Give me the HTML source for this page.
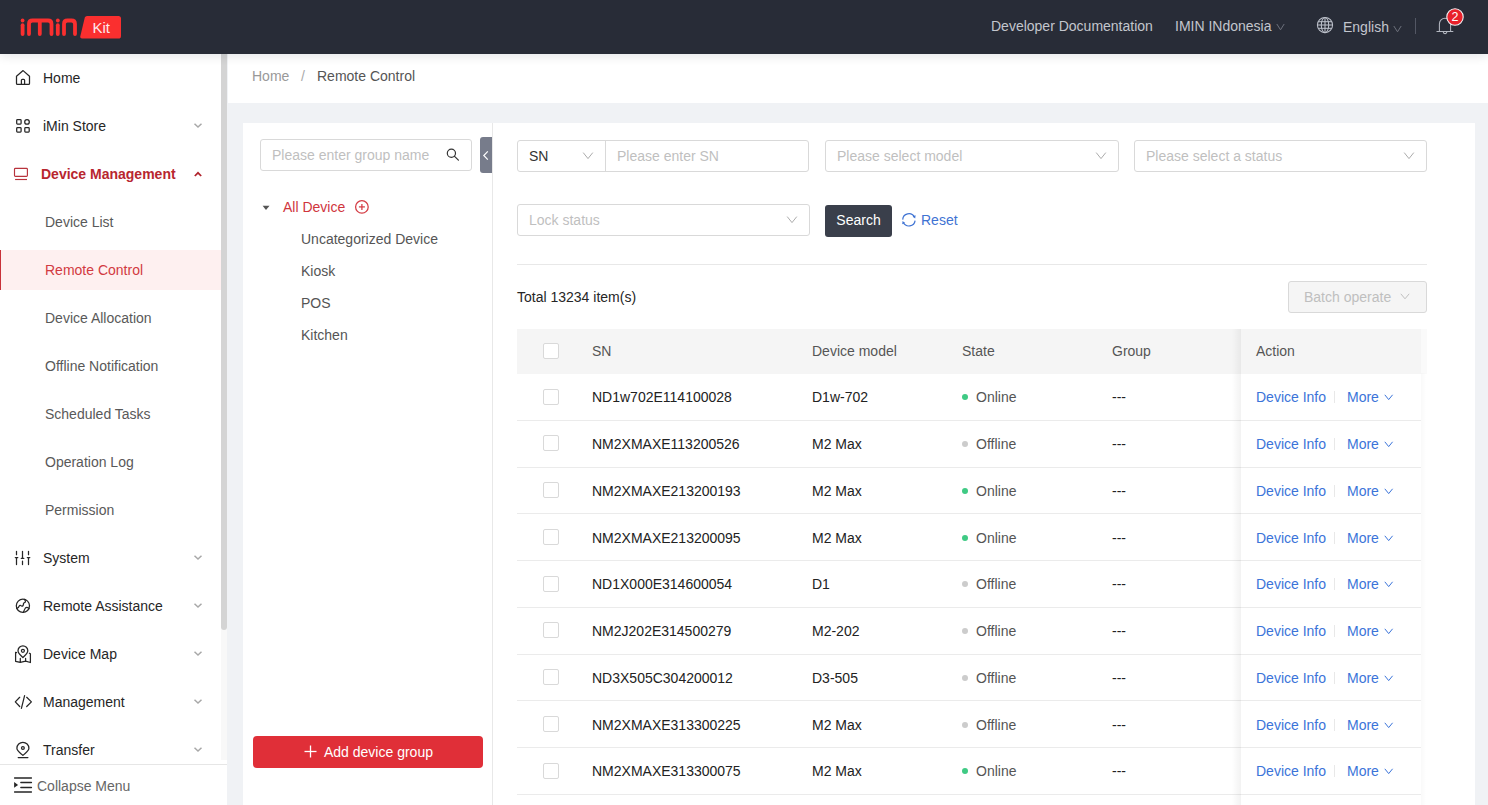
<!DOCTYPE html>
<html><head><meta charset="utf-8">
<style>
*{box-sizing:border-box;margin:0;padding:0}
html,body{width:1488px;height:805px;overflow:hidden;background:#f0f2f5;font-family:"Liberation Sans",sans-serif;font-size:14px;color:#262626}
.abs{position:absolute}
#hdr{position:absolute;left:0;top:0;width:1488px;height:54px;background:#282c37;z-index:10;box-shadow:0 2px 10px rgba(0,21,41,0.11)}
#side{position:absolute;left:0;top:54px;width:227px;height:751px;background:#fff}
.mi{position:absolute;left:0;width:221px;height:40px;line-height:40px;white-space:nowrap}
.mi .t{position:absolute;left:43px;top:0}
.mi.sub .t{left:45px;color:#595959}
.chev{position:absolute;left:193px;top:17px;width:7px;height:7px}
#bc{position:absolute;left:228px;top:54px;width:1260px;height:49px;background:#fff}
#card{position:absolute;left:243px;top:123px;width:1232px;height:682px;background:#fff}
.inp{position:absolute;border:1px solid #d9d9d9;border-radius:3px;background:#fff;height:32px;line-height:30px;color:#bfbfbf;padding-left:11px;white-space:nowrap}
.row{position:absolute;left:517px;width:904px;border-bottom:1px solid #ebebeb}
.cb{position:absolute;left:543px;width:16px;height:16px;border:1px solid #d9d9d9;border-radius:2px;background:#fff}
.cell{position:absolute;white-space:nowrap}
.lnk{color:#3b74d9}
</style></head><body>
<div id="hdr">
  <!-- logo -->
  <svg class="abs" style="left:0;top:0" width="130" height="54" viewBox="0 0 130 54">
    <g fill="none" stroke="#fa2f2f" stroke-width="3.8" stroke-linecap="round" stroke-linejoin="round">
      <line x1="22.6" y1="20.4" x2="22.6" y2="20.5"/>
      <line x1="22.6" y1="25.2" x2="22.6" y2="34.1"/>
      <path d="M29 34.1 V24 Q29 20.5 32.5 20.5 H48 Q51.5 20.5 51.5 24 V34.1 M39.8 21 V34.1"/>
      <line x1="57.8" y1="20.4" x2="57.8" y2="20.5"/>
      <line x1="57.8" y1="25.2" x2="57.8" y2="34.1"/>
      <path d="M64 34.1 V24 Q64 20.5 67.5 20.5 H71.5 Q75 20.5 75 24 V34.1"/>
    </g>
    <path d="M87 16 H118.5 a2.5 2.5 0 0 1 2.5 2.5 V36 a2.6 2.6 0 0 1 -2.6 2.6 H82 a1.8 1.8 0 0 1 -1.7 -2.4 L84.8 17.5 a2.4 2.4 0 0 1 2.2 -1.5z" fill="#fa2f2f"/>
    <text x="92.5" y="33.3" fill="#ffe8ea" font-family="Liberation Sans" font-size="15">Kit</text>
  </svg>
  <div class="abs" style="left:991px;top:18px;color:#c3c6cd;line-height:16px">Developer Documentation</div>
  <div class="abs" style="left:1175px;top:18px;color:#c3c6cd;line-height:16px">IMIN INdonesia</div>
  <svg class="abs" style="left:1276px;top:23px" width="9" height="8" viewBox="0 0 9 8"><path d="M0.8 1 L4.5 6.8 L8.2 1" fill="none" stroke="#6d717c" stroke-width="1"/></svg>
  <svg class="abs" style="left:1312px;top:12px" width="26" height="26" viewBox="1312 12 26 26"><g fill="none" stroke="#bcc0ca" stroke-width="1.05"><circle cx="1325" cy="25" r="7.6"/><ellipse cx="1325" cy="25" rx="3.7" ry="7.6"/><line x1="1325" y1="17.4" x2="1325" y2="32.6"/><line x1="1318.2" y1="21.7" x2="1331.8" y2="21.7"/><line x1="1317.4" y1="25" x2="1332.6" y2="25"/><line x1="1318.2" y1="28.3" x2="1331.8" y2="28.3"/></g></svg>
  <div class="abs" style="left:1343px;top:19px;color:#c3c6cd;line-height:16px">English</div>
  <svg class="abs" style="left:1393px;top:25px" width="9" height="8" viewBox="0 0 9 8"><path d="M0.8 1 L4.5 6.8 L8.2 1" fill="none" stroke="#6d717c" stroke-width="1"/></svg>
  <div class="abs" style="left:1415px;top:18px;width:1px;height:16px;background:#535764"></div>
  <svg class="abs" style="left:1430px;top:4px" width="40" height="36" viewBox="1430 4 40 36"><g fill="none" stroke="#b3b7c0" stroke-width="1.05"><path d="M1436.5 31.5 H1453.3 M1439.4 31.5 V23.9 A5.6 5.6 0 0 1 1450.6 23.9 V31.5"/><path d="M1443.2 31.8 A1.8 1.8 0 0 0 1446.8 31.8"/></g><circle cx="1455" cy="17" r="8.2" fill="#e8212b" stroke="#f4f4f6" stroke-width="1.1"/><text x="1455" y="21.3" text-anchor="middle" fill="#fff" font-family="Liberation Sans" font-size="12.5">2</text></svg>
</div>

<div id="side">
<div class="abs" style="left:0;top:196px;width:221px;height:40px;background:#fef0f0"></div>
<div class="abs" style="left:0;top:196px;width:1px;height:40px;background:#c8323a"></div>
<div class="abs" style="left:43px;top:16px;line-height:16px;color:#262626;white-space:nowrap">Home</div>
<div class="abs" style="left:43px;top:64px;line-height:16px;color:#262626;white-space:nowrap">iMin Store</div>
<div class="abs" style="left:41px;top:112px;line-height:16px;color:#b8262f;font-weight:bold;white-space:nowrap">Device Management</div>
<div class="abs" style="left:45px;top:160px;line-height:16px;color:#595959;white-space:nowrap">Device List</div>
<div class="abs" style="left:45px;top:208px;line-height:16px;color:#d23a41;white-space:nowrap">Remote Control</div>
<div class="abs" style="left:45px;top:256px;line-height:16px;color:#595959;white-space:nowrap">Device Allocation</div>
<div class="abs" style="left:45px;top:304px;line-height:16px;color:#595959;white-space:nowrap">Offline Notification</div>
<div class="abs" style="left:45px;top:352px;line-height:16px;color:#595959;white-space:nowrap">Scheduled Tasks</div>
<div class="abs" style="left:45px;top:400px;line-height:16px;color:#595959;white-space:nowrap">Operation Log</div>
<div class="abs" style="left:45px;top:448px;line-height:16px;color:#595959;white-space:nowrap">Permission</div>
<div class="abs" style="left:43px;top:496px;line-height:16px;color:#262626;white-space:nowrap">System</div>
<div class="abs" style="left:43px;top:544px;line-height:16px;color:#262626;white-space:nowrap">Remote Assistance</div>
<div class="abs" style="left:43px;top:592px;line-height:16px;color:#262626;white-space:nowrap">Device Map</div>
<div class="abs" style="left:43px;top:640px;line-height:16px;color:#262626;white-space:nowrap">Management</div>
<div class="abs" style="left:43px;top:688px;line-height:16px;color:#262626;white-space:nowrap">Transfer</div>
<div class="abs" style="left:221px;top:0;width:6px;height:706px;background:#f8f8f8"></div>
<div class="abs" style="left:221px;top:0;width:6px;height:576px;background:#d4d4d4;border-radius:0 0 3px 3px"></div>
<div class="abs" style="left:0;top:710px;width:227px;height:1px;background:#e6e6e6"></div>
<div class="abs" style="left:37px;top:724px;line-height:16px;color:#666;white-space:nowrap">Collapse Menu</div>
<svg class="abs" style="left:0;top:0" width="227" height="751" viewBox="0 54 227 751">
<g fill="none" stroke="#262626" stroke-width="1.25" stroke-linecap="round" stroke-linejoin="round">
<path d="M16.5 76.2 L23.1 70.6 L29.5 76.2 V83.4 Q29.5 84.4 28.5 84.4 H17.5 Q16.5 84.4 16.5 83.4 Z M21.4 84.4 V80.3 Q21.4 79.4 22.3 79.4 H23.7 Q24.6 79.4 24.6 80.3 V84.4"/>
<rect x="16.7" y="119.7" width="4.4" height="4.4" rx="0.8"/><circle cx="27" cy="121.9" r="2.3"/><rect x="16.7" y="127.7" width="4.4" height="4.4" rx="0.8"/><rect x="24.8" y="127.7" width="4.4" height="4.4" rx="0.8"/>
<path d="M16.5 551.3 V554.7 M15.3 557.5 H17.8 M16.5 557.5 V564.6 M22.5 551.3 V558.4 M21.3 558.4 H23.8 M22.5 561.2 V564.6 M28.5 551.3 V554.7 M27.3 557.5 H29.8 M28.5 557.5 V564.6"/>
<circle cx="22.9" cy="605.8" r="6.6"/><path d="M16.8 608.4 Q18.5 608.3 19.4 605.8 Q19.9 604.9 20.8 605.6 Q22 606.8 23.1 605.5 Q23.6 604.2 23.5 603.5 Q24 602.5 25 602.4 Q26 601.8 24.6 599.4 M23.4 612.3 Q24.4 609.5 25.4 608 Q26.4 607.2 27.6 607.6 Q28.5 608.2 29.1 608.7"/>
<path d="M22.9 657.5 C20.6 655.2 18 653.4 18 650.7 A4.9 4.9 0 0 1 27.8 650.7 C27.8 653.4 25.2 655.2 22.9 657.5 Z"/><circle cx="22.9" cy="650.8" r="1.5"/><path d="M16.6 652.6 L15.6 652.3 V661.3 L20.3 662.4 L25.6 661.2 L30.4 662.5 V653.8 L29.4 653.2 M20.3 658.4 V662.4 M25.6 658.4 V661.2"/>
<path d="M19.7 697.3 L15.3 701.9 L19.7 706.5 M26.7 697.3 L31.4 701.9 L26.7 706.5 M24.6 695.6 L21.4 708.3"/>
<path d="M22.9 755.4 C20 752.6 16.9 750.8 16.9 748.3 A6 6 0 0 1 28.9 748.3 C28.9 750.8 25.8 752.6 22.9 755.4 Z"/><circle cx="22.9" cy="748.1" r="1.4"/><path d="M18.2 757.6 H27.9"/>
</g>
<g fill="none" stroke="#b8333c" stroke-width="1.15"><rect x="14.5" y="168.3" width="12.9" height="8.1" rx="0.9"/><path d="M15.1 179.5 H27"/></g>
<path d="M194.5 123.7 L198 127.1 L201.5 123.7" fill="none" stroke="#a8a8a8" stroke-width="1.45"/>
<path d="M194.5 555.7 L198 559.1 L201.5 555.7" fill="none" stroke="#a8a8a8" stroke-width="1.45"/>
<path d="M194.5 603.7 L198 607.1 L201.5 603.7" fill="none" stroke="#a8a8a8" stroke-width="1.45"/>
<path d="M194.5 651.7 L198 655.1 L201.5 651.7" fill="none" stroke="#a8a8a8" stroke-width="1.45"/>
<path d="M194.5 699.7 L198 703.1 L201.5 699.7" fill="none" stroke="#a8a8a8" stroke-width="1.45"/>
<path d="M194.5 747.7 L198 751.1 L201.5 747.7" fill="none" stroke="#a8a8a8" stroke-width="1.45"/>
<path d="M194.8 176 L198 172.8 L201.2 176" fill="none" stroke="#b0232c" stroke-width="1.7"/>
<g stroke="#262626"><path d="M14.1 778 H31.9 M14.1 792 H31.9" stroke-width="1.7"/><path d="M20.9 782.6 H31.4 M20.9 787.4 H31.4" stroke-width="1.5" stroke-linecap="round"/></g><path d="M14.1 782 V787.8 L18.1 784.9Z" fill="#262626"/>
</svg>
</div>

<div id="bc">
  <div class="abs" style="left:24px;top:14px;color:#999;line-height:16px">Home</div>
  <div class="abs" style="left:73px;top:14px;color:#aaa;line-height:16px">/</div>
  <div class="abs" style="left:89px;top:14px;color:#555;line-height:16px">Remote Control</div>
</div>

<div id="card"></div>
<div class="abs" style="left:492px;top:123px;width:1px;height:682px;background:#e8e8e8"></div>
<div class="inp" style="left:260px;top:139px;width:212px;height:32px">Please enter group name</div>
<svg class="abs" style="left:444px;top:146px" width="18" height="18" viewBox="444 146 18 18"><g fill="none" stroke="#333" stroke-width="1.2"><circle cx="451.4" cy="153.2" r="4.1"/><line x1="454.3" y1="156.1" x2="458.4" y2="160.2" stroke-linecap="round"/></g></svg>
<div class="abs" style="left:480px;top:137px;width:12px;height:36px;background:#777c8b;border-radius:3px 0 0 3px"></div>
<svg class="abs" style="left:480px;top:148px" width="12" height="14" viewBox="480 148 12 14"><path d="M487.8 151.4 L483.8 155.5 L487.8 159.6" fill="none" stroke="#fff" stroke-width="1.2"/></svg>
<svg class="abs" style="left:261px;top:204px" width="10" height="8" viewBox="261 204 10 8"><path d="M262.6 205.8 H269.5 L266 210Z" fill="#555"/></svg>
<div class="abs" style="left:283px;top:199px;line-height:16px;color:#d0353d">All Device</div>
<svg class="abs" style="left:353px;top:198px" width="18" height="18" viewBox="353 198 18 18"><g fill="none" stroke="#d43c44" stroke-width="1.25"><circle cx="361.9" cy="206.9" r="6.3"/><line x1="361.9" y1="203.9" x2="361.9" y2="209.9"/><line x1="358.9" y1="206.9" x2="364.9" y2="206.9"/></g></svg>
<div class="abs" style="left:301px;top:231px;line-height:16px;color:#555">Uncategorized Device</div>
<div class="abs" style="left:301px;top:263px;line-height:16px;color:#555">Kiosk</div>
<div class="abs" style="left:301px;top:295px;line-height:16px;color:#555">POS</div>
<div class="abs" style="left:301px;top:327px;line-height:16px;color:#555">Kitchen</div>
<div class="abs" style="left:253px;top:736px;width:230px;height:32px;background:#e02f38;border-radius:4px"></div>
<svg class="abs" style="left:304px;top:745px" width="13" height="13" viewBox="0 0 13 13"><g stroke="#fff" stroke-width="1.3"><line x1="6.5" y1="0.5" x2="6.5" y2="12.5"/><line x1="0.5" y1="6.5" x2="12.5" y2="6.5"/></g></svg>
<div class="abs" style="left:324px;top:744px;line-height:16px;color:#fff">Add device group</div>
<div class="inp" style="left:517px;top:140px;width:292px;height:32px;color:#333"></div>
<div class="abs" style="left:605px;top:141px;width:1px;height:30px;background:#d9d9d9"></div>
<div class="abs" style="left:529px;top:148px;line-height:16px;color:#333">SN</div>
<svg class="abs" style="left:582px;top:152px" width="12" height="8" viewBox="0 0 12 8"><path d="M1.2 0.6 L6 6.6 L10.8 0.6" fill="none" stroke="#ababab" stroke-width="1"/></svg>
<div class="abs" style="left:617px;top:148px;line-height:16px;color:#bfbfbf">Please enter SN</div>
<div class="inp" style="left:825px;top:140px;width:294px;height:32px;line-height:30px">Please select model</div>
<svg class="abs" style="left:1095px;top:152px" width="12" height="8" viewBox="0 0 12 8"><path d="M1.2 0.6 L6 6.6 L10.8 0.6" fill="none" stroke="#ababab" stroke-width="1"/></svg>
<div class="inp" style="left:1134px;top:140px;width:293px;height:32px;line-height:30px">Please select a status</div>
<svg class="abs" style="left:1403px;top:152px" width="12" height="8" viewBox="0 0 12 8"><path d="M1.2 0.6 L6 6.6 L10.8 0.6" fill="none" stroke="#ababab" stroke-width="1"/></svg>
<div class="inp" style="left:517px;top:204px;width:293px;height:32px;line-height:30px">Lock status</div>
<svg class="abs" style="left:786px;top:216px" width="12" height="8" viewBox="0 0 12 8"><path d="M1.2 0.6 L6 6.6 L10.8 0.6" fill="none" stroke="#ababab" stroke-width="1"/></svg>
<div class="abs" style="left:825px;top:205px;width:67px;height:32px;background:#3a3f4b;border-radius:3px;color:#fff;line-height:30px;text-align:center">Search</div>
<svg class="abs" style="left:900px;top:210px" width="18" height="18" viewBox="0 0 18 18"><g fill="none" stroke="#3f73d3" stroke-width="1.2"><path d="M2.7 9.6 A6.2 6.2 0 0 1 14.4 7.1"/><path d="M15.1 10.6 A6.2 6.2 0 0 1 3.4 12.5"/></g><path d="M12.6 6.6 L15.6 5.3 L15.2 8.6Z M5.2 13 L2.2 14.3 L2.6 11Z" fill="#3f73d3"/></svg>
<div class="abs" style="left:921px;top:212px;line-height:16px;color:#3f73d3">Reset</div>
<div class="abs" style="left:517px;top:264px;width:910px;height:1px;background:#e8e8e8"></div>
<div class="abs" style="left:517px;top:289px;line-height:16px;color:#262626">Total 13234 item(s)</div>
<div class="abs" style="left:1288px;top:281px;width:139px;height:32px;background:#f5f5f5;border:1px solid #d9d9d9;border-radius:3px"></div>
<div class="abs" style="left:1304px;top:289px;line-height:16px;color:#bfbfbf">Batch operate</div>
<svg class="abs" style="left:1400px;top:293px" width="10" height="7" viewBox="0 0 10 7"><path d="M0.8 0.8 L5 5.8 L9.2 0.8" fill="none" stroke="#bfbfbf" stroke-width="1"/></svg>
<div class="abs" style="left:517px;top:329px;width:904px;height:44.7px;background:#f5f5f5"></div>
<div class="abs" style="left:1421px;top:329px;width:6px;height:44.7px;background:#fafafa"></div>
<div class="cb" style="top:343px"></div>
<div class="cell" style="left:592px;top:343px;line-height:16px;color:#555">SN</div>
<div class="cell" style="left:812px;top:343px;line-height:16px;color:#555">Device model</div>
<div class="cell" style="left:962px;top:343px;line-height:16px;color:#555">State</div>
<div class="cell" style="left:1112px;top:343px;line-height:16px;color:#555">Group</div>
<div class="cell" style="left:1256px;top:343px;line-height:16px;color:#555">Action</div>
<div class="abs" style="left:517px;top:420px;width:904px;height:1px;background:#ebebeb"></div>
<div class="cb" style="top:389px"></div>
<div class="cell" style="left:592px;top:389px;line-height:16px;color:#222">ND1w702E114100028</div>
<div class="cell" style="left:812px;top:389px;line-height:16px;color:#222">D1w-702</div>
<div class="abs" style="left:962px;top:394px;width:6px;height:6px;border-radius:50%;background:#3fca84"></div>
<div class="cell" style="left:976px;top:389px;line-height:16px;color:#555">Online</div>
<div class="cell" style="left:1112px;top:389px;line-height:16px;color:#222">---</div>
<div class="cell lnk" style="left:1256px;top:389px;line-height:16px">Device Info</div>
<div class="abs" style="left:1334px;top:391px;width:1px;height:12px;background:#e8e8e8"></div>
<div class="cell lnk" style="left:1347px;top:389px;line-height:16px">More</div>
<svg class="abs" style="left:1384px;top:394px" width="10" height="7" viewBox="0 0 10 7"><path d="M0.8 0.8 L4.7 5.6 L8.6 0.8" fill="none" stroke="#3b74d9" stroke-width="1"/></svg>
<div class="abs" style="left:517px;top:467px;width:904px;height:1px;background:#ebebeb"></div>
<div class="cb" style="top:435px"></div>
<div class="cell" style="left:592px;top:436px;line-height:16px;color:#222">NM2XMAXE113200526</div>
<div class="cell" style="left:812px;top:436px;line-height:16px;color:#222">M2 Max</div>
<div class="abs" style="left:962px;top:441px;width:6px;height:6px;border-radius:50%;background:#cccccc"></div>
<div class="cell" style="left:976px;top:436px;line-height:16px;color:#555">Offline</div>
<div class="cell" style="left:1112px;top:436px;line-height:16px;color:#222">---</div>
<div class="cell lnk" style="left:1256px;top:436px;line-height:16px">Device Info</div>
<div class="abs" style="left:1334px;top:438px;width:1px;height:12px;background:#e8e8e8"></div>
<div class="cell lnk" style="left:1347px;top:436px;line-height:16px">More</div>
<svg class="abs" style="left:1384px;top:441px" width="10" height="7" viewBox="0 0 10 7"><path d="M0.8 0.8 L4.7 5.6 L8.6 0.8" fill="none" stroke="#3b74d9" stroke-width="1"/></svg>
<div class="abs" style="left:517px;top:513px;width:904px;height:1px;background:#ebebeb"></div>
<div class="cb" style="top:482px"></div>
<div class="cell" style="left:592px;top:483px;line-height:16px;color:#222">NM2XMAXE213200193</div>
<div class="cell" style="left:812px;top:483px;line-height:16px;color:#222">M2 Max</div>
<div class="abs" style="left:962px;top:488px;width:6px;height:6px;border-radius:50%;background:#3fca84"></div>
<div class="cell" style="left:976px;top:483px;line-height:16px;color:#555">Online</div>
<div class="cell" style="left:1112px;top:483px;line-height:16px;color:#222">---</div>
<div class="cell lnk" style="left:1256px;top:483px;line-height:16px">Device Info</div>
<div class="abs" style="left:1334px;top:485px;width:1px;height:12px;background:#e8e8e8"></div>
<div class="cell lnk" style="left:1347px;top:483px;line-height:16px">More</div>
<svg class="abs" style="left:1384px;top:488px" width="10" height="7" viewBox="0 0 10 7"><path d="M0.8 0.8 L4.7 5.6 L8.6 0.8" fill="none" stroke="#3b74d9" stroke-width="1"/></svg>
<div class="abs" style="left:517px;top:560px;width:904px;height:1px;background:#ebebeb"></div>
<div class="cb" style="top:529px"></div>
<div class="cell" style="left:592px;top:530px;line-height:16px;color:#222">NM2XMAXE213200095</div>
<div class="cell" style="left:812px;top:530px;line-height:16px;color:#222">M2 Max</div>
<div class="abs" style="left:962px;top:535px;width:6px;height:6px;border-radius:50%;background:#3fca84"></div>
<div class="cell" style="left:976px;top:530px;line-height:16px;color:#555">Online</div>
<div class="cell" style="left:1112px;top:530px;line-height:16px;color:#222">---</div>
<div class="cell lnk" style="left:1256px;top:530px;line-height:16px">Device Info</div>
<div class="abs" style="left:1334px;top:532px;width:1px;height:12px;background:#e8e8e8"></div>
<div class="cell lnk" style="left:1347px;top:530px;line-height:16px">More</div>
<svg class="abs" style="left:1384px;top:535px" width="10" height="7" viewBox="0 0 10 7"><path d="M0.8 0.8 L4.7 5.6 L8.6 0.8" fill="none" stroke="#3b74d9" stroke-width="1"/></svg>
<div class="abs" style="left:517px;top:607px;width:904px;height:1px;background:#ebebeb"></div>
<div class="cb" style="top:576px"></div>
<div class="cell" style="left:592px;top:576px;line-height:16px;color:#222">ND1X000E314600054</div>
<div class="cell" style="left:812px;top:576px;line-height:16px;color:#222">D1</div>
<div class="abs" style="left:962px;top:581px;width:6px;height:6px;border-radius:50%;background:#cccccc"></div>
<div class="cell" style="left:976px;top:576px;line-height:16px;color:#555">Offline</div>
<div class="cell" style="left:1112px;top:576px;line-height:16px;color:#222">---</div>
<div class="cell lnk" style="left:1256px;top:576px;line-height:16px">Device Info</div>
<div class="abs" style="left:1334px;top:578px;width:1px;height:12px;background:#e8e8e8"></div>
<div class="cell lnk" style="left:1347px;top:576px;line-height:16px">More</div>
<svg class="abs" style="left:1384px;top:581px" width="10" height="7" viewBox="0 0 10 7"><path d="M0.8 0.8 L4.7 5.6 L8.6 0.8" fill="none" stroke="#3b74d9" stroke-width="1"/></svg>
<div class="abs" style="left:517px;top:654px;width:904px;height:1px;background:#ebebeb"></div>
<div class="cb" style="top:622px"></div>
<div class="cell" style="left:592px;top:623px;line-height:16px;color:#222">NM2J202E314500279</div>
<div class="cell" style="left:812px;top:623px;line-height:16px;color:#222">M2-202</div>
<div class="abs" style="left:962px;top:628px;width:6px;height:6px;border-radius:50%;background:#cccccc"></div>
<div class="cell" style="left:976px;top:623px;line-height:16px;color:#555">Offline</div>
<div class="cell" style="left:1112px;top:623px;line-height:16px;color:#222">---</div>
<div class="cell lnk" style="left:1256px;top:623px;line-height:16px">Device Info</div>
<div class="abs" style="left:1334px;top:625px;width:1px;height:12px;background:#e8e8e8"></div>
<div class="cell lnk" style="left:1347px;top:623px;line-height:16px">More</div>
<svg class="abs" style="left:1384px;top:628px" width="10" height="7" viewBox="0 0 10 7"><path d="M0.8 0.8 L4.7 5.6 L8.6 0.8" fill="none" stroke="#3b74d9" stroke-width="1"/></svg>
<div class="abs" style="left:517px;top:700px;width:904px;height:1px;background:#ebebeb"></div>
<div class="cb" style="top:669px"></div>
<div class="cell" style="left:592px;top:670px;line-height:16px;color:#222">ND3X505C304200012</div>
<div class="cell" style="left:812px;top:670px;line-height:16px;color:#222">D3-505</div>
<div class="abs" style="left:962px;top:675px;width:6px;height:6px;border-radius:50%;background:#cccccc"></div>
<div class="cell" style="left:976px;top:670px;line-height:16px;color:#555">Offline</div>
<div class="cell" style="left:1112px;top:670px;line-height:16px;color:#222">---</div>
<div class="cell lnk" style="left:1256px;top:670px;line-height:16px">Device Info</div>
<div class="abs" style="left:1334px;top:672px;width:1px;height:12px;background:#e8e8e8"></div>
<div class="cell lnk" style="left:1347px;top:670px;line-height:16px">More</div>
<svg class="abs" style="left:1384px;top:675px" width="10" height="7" viewBox="0 0 10 7"><path d="M0.8 0.8 L4.7 5.6 L8.6 0.8" fill="none" stroke="#3b74d9" stroke-width="1"/></svg>
<div class="abs" style="left:517px;top:747px;width:904px;height:1px;background:#ebebeb"></div>
<div class="cb" style="top:716px"></div>
<div class="cell" style="left:592px;top:717px;line-height:16px;color:#222">NM2XMAXE313300225</div>
<div class="cell" style="left:812px;top:717px;line-height:16px;color:#222">M2 Max</div>
<div class="abs" style="left:962px;top:722px;width:6px;height:6px;border-radius:50%;background:#cccccc"></div>
<div class="cell" style="left:976px;top:717px;line-height:16px;color:#555">Offline</div>
<div class="cell" style="left:1112px;top:717px;line-height:16px;color:#222">---</div>
<div class="cell lnk" style="left:1256px;top:717px;line-height:16px">Device Info</div>
<div class="abs" style="left:1334px;top:719px;width:1px;height:12px;background:#e8e8e8"></div>
<div class="cell lnk" style="left:1347px;top:717px;line-height:16px">More</div>
<svg class="abs" style="left:1384px;top:722px" width="10" height="7" viewBox="0 0 10 7"><path d="M0.8 0.8 L4.7 5.6 L8.6 0.8" fill="none" stroke="#3b74d9" stroke-width="1"/></svg>
<div class="abs" style="left:517px;top:794px;width:904px;height:1px;background:#ebebeb"></div>
<div class="cb" style="top:763px"></div>
<div class="cell" style="left:592px;top:763px;line-height:16px;color:#222">NM2XMAXE313300075</div>
<div class="cell" style="left:812px;top:763px;line-height:16px;color:#222">M2 Max</div>
<div class="abs" style="left:962px;top:768px;width:6px;height:6px;border-radius:50%;background:#3fca84"></div>
<div class="cell" style="left:976px;top:763px;line-height:16px;color:#555">Online</div>
<div class="cell" style="left:1112px;top:763px;line-height:16px;color:#222">---</div>
<div class="cell lnk" style="left:1256px;top:763px;line-height:16px">Device Info</div>
<div class="abs" style="left:1334px;top:765px;width:1px;height:12px;background:#e8e8e8"></div>
<div class="cell lnk" style="left:1347px;top:763px;line-height:16px">More</div>
<svg class="abs" style="left:1384px;top:768px" width="10" height="7" viewBox="0 0 10 7"><path d="M0.8 0.8 L4.7 5.6 L8.6 0.8" fill="none" stroke="#3b74d9" stroke-width="1"/></svg>
<div class="abs" style="left:1232px;top:329px;width:9px;height:476px;background:linear-gradient(to right,rgba(0,0,0,0),rgba(0,0,0,0.05))"></div>
<div class="abs" style="left:1421px;top:373px;width:5px;height:432px;background:linear-gradient(to right,rgba(0,0,0,0.025),rgba(0,0,0,0))"></div>
</body></html>
